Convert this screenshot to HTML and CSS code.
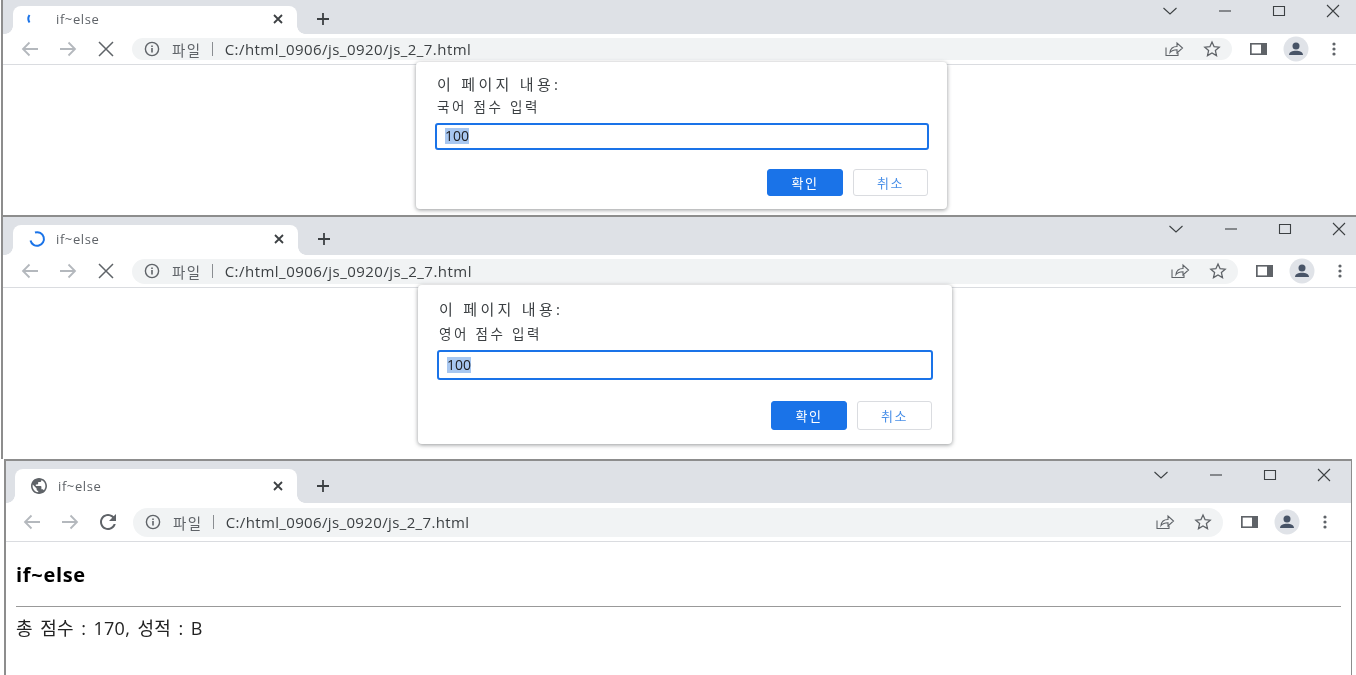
FILE: index.html
```html
<!DOCTYPE html>
<html lang="ko">
<head>
<meta charset="utf-8">
<title>if~else</title>
<link rel="stylesheet" href="styles.css">
</head>
<body>
<svg class="sprite" aria-hidden="true">
  <symbol id="i-back" viewBox="0 0 24 24"><path d="M20 12H5M11.5 5.5 5 12l6.500 6.500"/></symbol>
  <symbol id="i-forward" viewBox="0 0 24 24"><path d="M4 12h15M12.500 5.500 19 12l-6.500 6.500"/></symbol>
  <symbol id="i-stop" viewBox="0 0 24 24"><path d="M5 5l14 14M19 5 5 19"/></symbol>
  <symbol id="i-reload" viewBox="0 0 24 24"><path d="M17.650 6.350C16.200 4.900 14.210 4 12 4c-4.420 0-7.990 3.580-7.990 8s3.570 8 7.990 8c3.730 0 6.840-2.550 7.730-6h-2.080c-.82 2.330-3.040 4-5.650 4-3.310 0-6-2.690-6-6s2.690-6 6-6c1.660 0 3.140.69 4.220 1.780L13 11h7V4l-2.350 2.350z"/></symbol>
  <symbol id="i-info" viewBox="0 0 16 16"><circle cx="8" cy="8" r="6.600" fill="none" stroke="currentColor" stroke-width="1.400"/><path d="M7.200 7h1.600v4.500H7.200zM7.200 4.400h1.600V6H7.200z" fill="currentColor"/></symbol>
  <symbol id="i-share" viewBox="0 0 20 16"><path d="M2 6.500v8h12v-2.500M6 11.500C6.500 7.500 9.500 5.500 13 5.500V2l5.500 5-5.500 5V8.700c-3 0-5.500.8-7 2.800z"/></symbol>
  <symbol id="i-star" viewBox="0 0 18 18"><path d="M9 2l2.100 4.700 5.100.5-3.800 3.400 1.100 5L9 13l-4.500 2.600 1.100-5L1.800 7.200l5.100-.5z"/></symbol>
  <symbol id="i-panel" viewBox="0 0 17 12"><path d="M0 0h17v12H0z" fill="#5f6368"/><path d="M1.700 1.600H11v8.800H1.700z" fill="#fff"/></symbol>
  <symbol id="i-avatar" viewBox="0 0 26 26"><circle cx="13" cy="13" r="12.500" fill="#e0e3e8"/><circle cx="13" cy="10" r="3.500" fill="#485467"/><path d="M6 19c0-3 3.500-4.300 7-4.300s7 1.300 7 4.300z" fill="#485467"/></symbol>
  <symbol id="i-dots" viewBox="0 0 4 16"><circle cx="2" cy="3" r="1.600"/><circle cx="2" cy="8" r="1.600"/><circle cx="2" cy="13" r="1.600"/></symbol>
  <symbol id="i-chevron" viewBox="0 0 14 14"><path d="M.5 4 7 10l6.500-6"/></symbol>
  <symbol id="i-min" viewBox="0 0 14 14"><path d="M1 7h12"/></symbol>
  <symbol id="i-max" viewBox="0 0 14 14"><path d="M1.500 2.500h11v9h-11z"/></symbol>
  <symbol id="i-close" viewBox="0 0 14 14"><path d="M1 1l12 12M13 1 1 13"/></symbol>
  <symbol id="i-tabx" viewBox="0 0 12 12"><path d="M2 2l8 8M10 2l-8 8"/></symbol>
  <symbol id="i-plus" viewBox="0 0 14 14"><path d="M7 1v12M1 7h12"/></symbol>
  <symbol id="i-globe" viewBox="2 2 20 20"><path d="M12 2C6.480 2 2 6.480 2 12s4.480 10 10 10 10-4.480 10-10S17.520 2 12 2zm-1 17.930c-3.950-.49-7-3.850-7-7.930 0-.62.08-1.210.21-1.790L9 15v1c0 1.100.9 2 2 2v1.930zm6.900-2.540c-.26-.81-1-1.390-1.900-1.390h-1v-3c0-.55-.45-1-1-1H8v-2h2c.55 0 1-.45 1-1V7h2c1.100 0 2-.9 2-2v-.41c2.930 1.190 5 4.060 5 7.410 0 2.080-.8 3.970-2.100 5.390z"/></symbol>
</svg>

<main class="desk">
  <section class="win win-a">
    <header class="strip">
      <div class="tab">
        <svg class="fav spin"><path d="M.5 4A7 7 0 0 0 .5 11.500"/></svg>
        <span class="tab-title">if~else</span>
        <svg class="tab-x"><use href="#i-tabx"/></svg>
      </div>
      <div class="newtab"><svg class="plus"><use href="#i-plus"/></svg></div>
      <div class="ctls">
        <span class="ctl"><svg class="ctl-i"><use href="#i-chevron"/></svg></span>
        <span class="ctl"><svg class="ctl-i"><use href="#i-min"/></svg></span>
        <span class="ctl"><svg class="ctl-i"><use href="#i-max"/></svg></span>
        <span class="ctl"><svg class="ctl-i"><use href="#i-close"/></svg></span>
      </div>
    </header>
    <nav class="bar">
      <span class="btn"><svg class="nav off"><use href="#i-back"/></svg></span>
      <span class="btn"><svg class="nav off"><use href="#i-forward"/></svg></span>
      <span class="btn"><svg class="nav"><use href="#i-stop"/></svg></span>
      <div class="omni">
        <svg class="info"><use href="#i-info"/></svg>
        <span class="scheme">파일</span>
        <span class="sep"></span>
        <span class="url">C:/html_0906/js_0920/js_2_7.html</span>
        <span class="omni-end">
          <span class="btn"><svg class="share"><use href="#i-share"/></svg></span>
          <span class="btn"><svg class="star"><use href="#i-star"/></svg></span>
        </span>
      </div>
      <span class="btn first-end"><svg class="panel"><use href="#i-panel"/></svg></span>
      <span class="btn"><svg class="avatar"><use href="#i-avatar"/></svg></span>
      <span class="btn"><svg class="dots"><use href="#i-dots"/></svg></span>
    </nav>
    <div class="dialog">
      <p class="d-title">이 페이지 내용:</p>
      <p class="d-msg">국어 점수 입력</p>
      <div class="field"><span class="sel">100</span></div>
      <div class="d-btns">
        <button class="ok">확인</button>
        <button class="cancel">취소</button>
      </div>
    </div>
  </section>

  <section class="win win-b">
    <header class="strip">
      <div class="tab">
        <svg class="fav spin"><path d="M6 1.500A6.800 6.800 0 1 1 1.500 9.500"/></svg>
        <span class="tab-title">if~else</span>
        <svg class="tab-x"><use href="#i-tabx"/></svg>
      </div>
      <div class="newtab"><svg class="plus"><use href="#i-plus"/></svg></div>
      <div class="ctls">
        <span class="ctl"><svg class="ctl-i"><use href="#i-chevron"/></svg></span>
        <span class="ctl"><svg class="ctl-i"><use href="#i-min"/></svg></span>
        <span class="ctl"><svg class="ctl-i"><use href="#i-max"/></svg></span>
        <span class="ctl"><svg class="ctl-i"><use href="#i-close"/></svg></span>
      </div>
    </header>
    <nav class="bar">
      <span class="btn"><svg class="nav off"><use href="#i-back"/></svg></span>
      <span class="btn"><svg class="nav off"><use href="#i-forward"/></svg></span>
      <span class="btn"><svg class="nav"><use href="#i-stop"/></svg></span>
      <div class="omni">
        <svg class="info"><use href="#i-info"/></svg>
        <span class="scheme">파일</span>
        <span class="sep"></span>
        <span class="url">C:/html_0906/js_0920/js_2_7.html</span>
        <span class="omni-end">
          <span class="btn"><svg class="share"><use href="#i-share"/></svg></span>
          <span class="btn"><svg class="star"><use href="#i-star"/></svg></span>
        </span>
      </div>
      <span class="btn first-end"><svg class="panel"><use href="#i-panel"/></svg></span>
      <span class="btn"><svg class="avatar"><use href="#i-avatar"/></svg></span>
      <span class="btn"><svg class="dots"><use href="#i-dots"/></svg></span>
    </nav>
    <div class="dialog">
      <p class="d-title">이 페이지 내용:</p>
      <p class="d-msg">영어 점수 입력</p>
      <div class="field"><span class="sel">100</span></div>
      <div class="d-btns">
        <button class="ok">확인</button>
        <button class="cancel">취소</button>
      </div>
    </div>
  </section>

  <section class="win win-c">
    <header class="strip">
      <div class="tab">
        <svg class="fav globe"><use href="#i-globe"/></svg>
        <span class="tab-title">if~else</span>
        <svg class="tab-x"><use href="#i-tabx"/></svg>
      </div>
      <div class="newtab"><svg class="plus"><use href="#i-plus"/></svg></div>
      <div class="ctls">
        <span class="ctl"><svg class="ctl-i"><use href="#i-chevron"/></svg></span>
        <span class="ctl"><svg class="ctl-i"><use href="#i-min"/></svg></span>
        <span class="ctl"><svg class="ctl-i"><use href="#i-max"/></svg></span>
        <span class="ctl"><svg class="ctl-i"><use href="#i-close"/></svg></span>
      </div>
    </header>
    <nav class="bar">
      <span class="btn"><svg class="nav off"><use href="#i-back"/></svg></span>
      <span class="btn"><svg class="nav off"><use href="#i-forward"/></svg></span>
      <span class="btn"><svg class="reload"><use href="#i-reload"/></svg></span>
      <div class="omni">
        <svg class="info"><use href="#i-info"/></svg>
        <span class="scheme">파일</span>
        <span class="sep"></span>
        <span class="url">C:/html_0906/js_0920/js_2_7.html</span>
        <span class="omni-end">
          <span class="btn"><svg class="share"><use href="#i-share"/></svg></span>
          <span class="btn"><svg class="star"><use href="#i-star"/></svg></span>
        </span>
      </div>
      <span class="btn first-end"><svg class="panel"><use href="#i-panel"/></svg></span>
      <span class="btn"><svg class="avatar"><use href="#i-avatar"/></svg></span>
      <span class="btn"><svg class="dots"><use href="#i-dots"/></svg></span>
    </nav>
    <article class="page">
      <h1 class="page-h">if~else</h1>
      <hr class="page-hr">
      <p class="page-p">총 점수 : 170, 성적 : B</p>
    </article>
  </section>
</main>
</body>
</html>
```

FILE: styles.css
```css
* { box-sizing: border-box; }

html, body {
  margin: 0;
  height: 675px;
  overflow: hidden;
  background: #fff;
}

body {
  font-family: "Open Sans", "Noto Sans CJK KR", sans-serif;
  color: #3c4043;
}

.sprite { display: none; }

.desk {
  display: flex;
  flex-direction: column;
  width: 1356px;
  height: 675px;
  overflow: hidden;
  filter: blur(0.5px);
}

.win {
  position: relative;
  flex: none;
  background: #fff;
  border-left: 2px solid #8d8d8d;
}

.win-a {
  width: 1359px;
  height: 215px;
  margin-left: 1px;
  --strip: 34px;
  --stripl: 10px;
  --tabh: 28px;
  --tabw: 284px;
  --tabpad: 2px;
  --ctlh: 22px;
  --barh: 30px;
  --barl: 8px;
  --omnih: 22px;
  --omnil: 7px;
  --urlls: 0.45px;
}

.win-b {
  width: 1365px;
  height: 244px;
  margin-left: 1px;
  border-top: 2px solid #8d8d8d;
  --strip: 38px;
  --stripl: 10px;
  --tabh: 30px;
  --tabw: 285px;
  --tabpad: 2px;
  --ctlh: 24px;
  --barh: 32px;
  --barl: 8px;
  --omnih: 25px;
  --omnil: 7px;
  --urlls: 0.47px;
}

.win-c {
  width: 1348px;
  height: 216px;
  margin-left: 4px;
  border-top: 2px solid #8d8d8d;
  border-right: 1px solid #8d8d8d;
  --strip: 42px;
  --stripl: 9px;
  --tabh: 34px;
  --tabw: 282px;
  --tabpad: 0px;
  --ctlh: 28px;
  --barh: 38px;
  --barl: 7px;
  --omnih: 29px;
  --omnil: 6px;
  --urlls: 0.36px;
}

/* tab strip */
.strip {
  display: flex;
  align-items: flex-end;
  height: var(--strip);
  padding-left: var(--stripl);
  background: #dee1e6;
}

.tab {
  position: relative;
  display: flex;
  align-items: center;
  flex: none;
  width: var(--tabw);
  height: var(--tabh);
  padding: 0 13px var(--tabpad) 16px;
  background: #fff;
  border-radius: 8px 8px 0 0;
}

.tab::before,
.tab::after {
  content: "";
  position: absolute;
  bottom: 0;
  width: 8px;
  height: 8px;
}

.tab::before {
  left: -8px;
  background: radial-gradient(circle at 0 0, transparent 7.500px, #fff 8px);
}

.tab::after {
  right: -8px;
  background: radial-gradient(circle at 100% 0, transparent 7.500px, #fff 8px);
}

.fav {
  flex: none;
  width: 16px;
  height: 16px;
  overflow: visible;
}

.spin {
  fill: none;
  stroke: #1a73e8;
  stroke-width: 2;
}

.globe { fill: #5f6368; }

.tab-title {
  margin-left: 11px;
  font-size: 13px;
  letter-spacing: 0.6px;
  color: #5f6368;
}

.tab-x {
  flex: none;
  width: 12px;
  height: 12px;
  margin-left: auto;
  fill: none;
  stroke: #3c4043;
  stroke-width: 1.800;
}

.newtab {
  display: flex;
  align-items: center;
  justify-content: center;
  flex: none;
  width: 20px;
  height: var(--tabh);
  margin-left: 16px;
  padding-bottom: var(--tabpad);
}

.plus {
  width: 14px;
  height: 14px;
  fill: none;
  stroke: #3c4043;
  stroke-width: 1.800;
}

.ctls {
  display: flex;
  align-self: flex-start;
  margin-left: auto;
}

.ctl {
  display: flex;
  align-items: center;
  justify-content: center;
  width: 54.200px;
  height: var(--ctlh);
}

.ctl-i {
  width: 14px;
  height: 14px;
  fill: none;
  stroke: #3c4043;
  stroke-width: 1.100;
}

/* toolbar */
.bar {
  display: flex;
  align-items: center;
  height: calc(var(--barh) + 1px);
  padding: 0 7px 0 var(--barl);
  background: #fff;
  border-bottom: 1px solid #dadce0;
}

.btn {
  display: flex;
  align-items: center;
  justify-content: center;
  flex: none;
  width: 38px;
  height: 100%;
}

.first-end { margin-left: 7px; }

.nav {
  width: 24px;
  height: 24px;
  fill: none;
  stroke: #5f6368;
  stroke-width: 1.500;
}

.nav.off { stroke: #b4b8bd; stroke-width: 1.800; }

.reload {
  width: 24px;
  height: 24px;
  fill: #5f6368;
}

.omni {
  display: flex;
  align-items: center;
  flex: 1;
  height: var(--omnih);
  margin-left: var(--omnil);
  padding-left: 12px;
  background: #f1f3f4;
  border-radius: 15px;
  font-size: 15px;
}

.info {
  flex: none;
  width: 16px;
  height: 16px;
  color: #5f6368;
}

.scheme {
  margin-left: 12px;
  font-size: 14.500px;
  letter-spacing: 1.500px;
  color: #5f6368;
}

.sep {
  flex: none;
  width: 1px;
  height: 14px;
  margin: 0 12px 0 10px;
  background: #8a8d91;
}

.url {
  letter-spacing: var(--urlls);
  color: #3c4043;
}

.omni-end {
  display: flex;
  align-items: center;
  height: 100%;
  margin-left: auto;
  padding-right: 1px;
}

.share {
  width: 20px;
  height: 16px;
  fill: none;
  stroke: #5f6368;
  stroke-width: 1.100;
}

.star {
  width: 18px;
  height: 18px;
  fill: none;
  stroke: #5f6368;
  stroke-width: 1.300;
}

.panel { width: 17px; height: 12px; }
.avatar { width: 26px; height: 26px; }

.dots {
  width: 4px;
  height: 16px;
  fill: #5f6368;
}

/* dialog */
.dialog {
  position: absolute;
  z-index: 2;
  display: flex;
  flex-direction: column;
  background: #fff;
  border-radius: 4px;
  box-shadow: 0 1px 4px rgba(60, 64, 67, 0.55);
}

.win-a .dialog {
  left: 413px;
  top: 62px;
  width: 531px;
  height: 147px;
  padding: 12px 18px 0 19px;
  --fieldh: 27px;
  --fieldb: 2px;
  --btnh: 27px;
  --msgt: 3px;
  --btnt: 19px;
  --btnr: 1px;
}

.win-b .dialog {
  left: 415px;
  top: 68px;
  width: 534px;
  height: 159px;
  padding: 14px 19px 0 19px;
  --fieldh: 30px;
  --fieldb: 0px;
  --btnh: 29px;
  --msgt: 5px;
  --btnt: 21px;
  --btnr: 1px;
}

.d-title {
  margin: 0;
  padding-left: 2px;
  font-size: 15px;
  line-height: 20px;
  letter-spacing: 3.300px;
  color: #3c4043;
}

.d-msg {
  margin: var(--msgt) 0 0;
  padding-left: 2px;
  font-size: 13.500px;
  line-height: 20px;
  letter-spacing: 2.700px;
  color: #3c4043;
}

.field {
  display: flex;
  align-items: center;
  height: var(--fieldh);
  margin-top: 6px;
  padding-left: 8px;
  padding-bottom: var(--fieldb);
  border: 2px solid #1a73e8;
  border-radius: 3px;
  font-size: 14px;
}

.sel {
  background: #a8c7f0;
  color: #202124;
  line-height: 16px;
}

.d-btns {
  display: flex;
  justify-content: flex-end;
  gap: 10px;
  margin-top: var(--btnt);
  padding-right: var(--btnr);
}

.ok,
.cancel {
  width: 76px;
  height: var(--btnh);
  padding: 0;
  border-radius: 3px;
  font-family: inherit;
  font-size: 13px;
  letter-spacing: 1.500px;
}

.ok {
  background: #1a73e8;
  border: 1px solid #1a73e8;
  color: #fff;
}

.cancel {
  width: 75px;
  background: #fff;
  border: 1px solid #dadce0;
  color: #4a90e8;
}

/* page content */
.page { padding: 21px 10px 0; }

.page-h {
  margin: 0;
  font-size: 20px;
  line-height: 24px;
  letter-spacing: 0.7px;
  font-weight: 700;
  color: #000;
}

.page-hr {
  height: 1px;
  margin: 19px 0 9px;
  border: 0;
  background: #999;
}

.page-p {
  margin: 0;
  font-size: 18px;
  line-height: 24px;
  letter-spacing: 0.3px;
  word-spacing: 2.300px;
  color: #222;
}
```
